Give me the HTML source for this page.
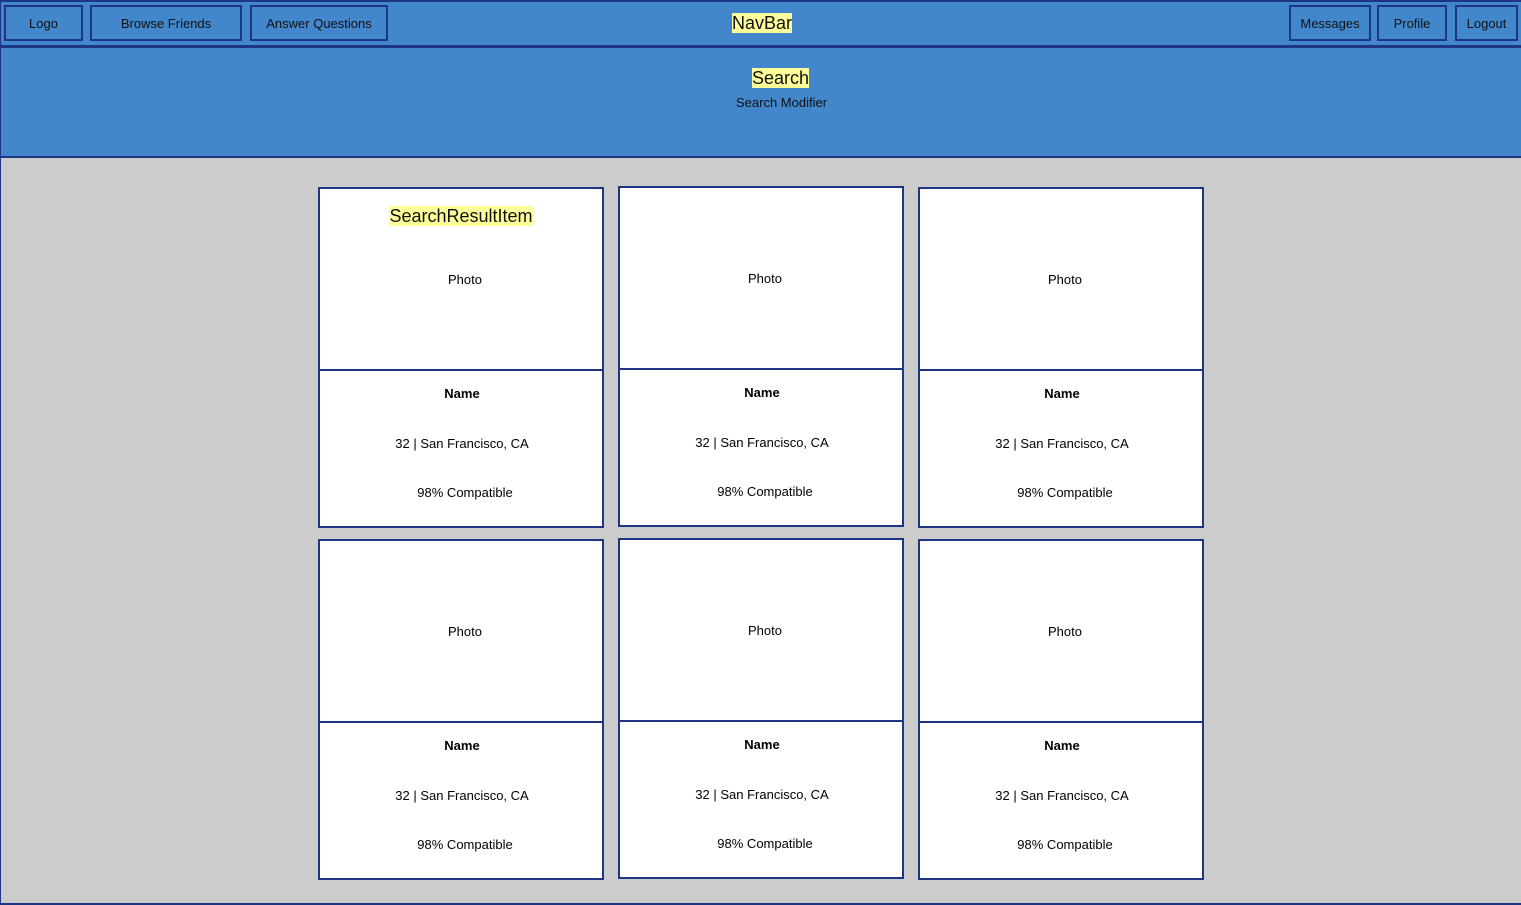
<!DOCTYPE html>
<html><head><meta charset="utf-8"><style>
*{margin:0;padding:0;box-sizing:border-box}
body{width:1521px;height:905px;background:#fff;font-family:"Liberation Sans",sans-serif;position:relative;overflow:hidden;color:#000}
.abs{position:absolute}
.nav{left:0;top:0;width:1521px;height:46px;background:#4287cc;border-top:2px solid #1e3584;border-left:1px solid #1e3584}
.btn{position:absolute;top:5px;height:36px;border:2px solid #1e3584;font-size:13px;display:flex;align-items:center;justify-content:center;color:#111}
.hl{background:#ffff99;color:#111}
.sep{left:0;top:45px;width:1521px;height:3px;background:#1e3584}
.search{left:0;top:48px;width:1521px;height:110px;background:#4287cc;border-left:1px solid #1e3584;border-bottom:2px solid #1e3584}
.main{left:0;top:158px;width:1521px;height:747px;background:#cccccc;border-left:1px solid #1e3584;border-bottom:2px solid #1e3584}
.card{position:absolute;width:286px;height:341px;background:#fff;border:2px solid #1e3584}
.card .div{position:absolute;left:0;top:180px;width:282px;height:2px;background:#1e3584}
.t{position:absolute;left:1px;width:282px;text-align:center;font-size:13px;line-height:16px}
</style></head><body>
<div class="abs nav"></div>
<div class="btn" style="left:4px;width:79px">Logo</div>
<div class="btn" style="left:90px;width:152px">Browse Friends</div>
<div class="btn" style="left:250px;width:138px">Answer Questions</div>
<div class="btn" style="left:1289px;width:82px">Messages</div>
<div class="btn" style="left:1377px;width:70px">Profile</div>
<div class="btn" style="left:1455px;width:63px">Logout</div>
<div class="abs hl" style="left:732px;top:13px;font-size:18px;line-height:20px">NavBar</div>
<div class="abs sep"></div>
<div class="abs search"></div>
<div class="abs hl" style="left:752px;top:68px;font-size:18px;line-height:20px">Search</div>
<div class="abs" style="left:736px;top:95px;font-size:13px;color:#111">Search Modifier</div>
<div class="abs main"></div>

<div class="card" style="left:318px;top:187px"><div class="t" style="top:17px;left:0"><span class="hl" style="font-size:18px;line-height:20px">SearchResultItem</span></div><div class="t" style="top:83px;left:4px">Photo</div><div class="div"></div><div class="t" style="top:197px;font-weight:bold">Name</div><div class="t" style="top:247px">32 | San Francisco, CA</div><div class="t" style="top:296px;left:4px">98% Compatible</div></div>
<div class="card" style="left:618px;top:186px"><div class="t" style="top:83px;left:4px">Photo</div><div class="div"></div><div class="t" style="top:197px;font-weight:bold">Name</div><div class="t" style="top:247px">32 | San Francisco, CA</div><div class="t" style="top:296px;left:4px">98% Compatible</div></div>
<div class="card" style="left:918px;top:187px"><div class="t" style="top:83px;left:4px">Photo</div><div class="div"></div><div class="t" style="top:197px;font-weight:bold">Name</div><div class="t" style="top:247px">32 | San Francisco, CA</div><div class="t" style="top:296px;left:4px">98% Compatible</div></div>
<div class="card" style="left:318px;top:539px"><div class="t" style="top:83px;left:4px">Photo</div><div class="div"></div><div class="t" style="top:197px;font-weight:bold">Name</div><div class="t" style="top:247px">32 | San Francisco, CA</div><div class="t" style="top:296px;left:4px">98% Compatible</div></div>
<div class="card" style="left:618px;top:538px"><div class="t" style="top:83px;left:4px">Photo</div><div class="div"></div><div class="t" style="top:197px;font-weight:bold">Name</div><div class="t" style="top:247px">32 | San Francisco, CA</div><div class="t" style="top:296px;left:4px">98% Compatible</div></div>
<div class="card" style="left:918px;top:539px"><div class="t" style="top:83px;left:4px">Photo</div><div class="div"></div><div class="t" style="top:197px;font-weight:bold">Name</div><div class="t" style="top:247px">32 | San Francisco, CA</div><div class="t" style="top:296px;left:4px">98% Compatible</div></div>
</body></html>
